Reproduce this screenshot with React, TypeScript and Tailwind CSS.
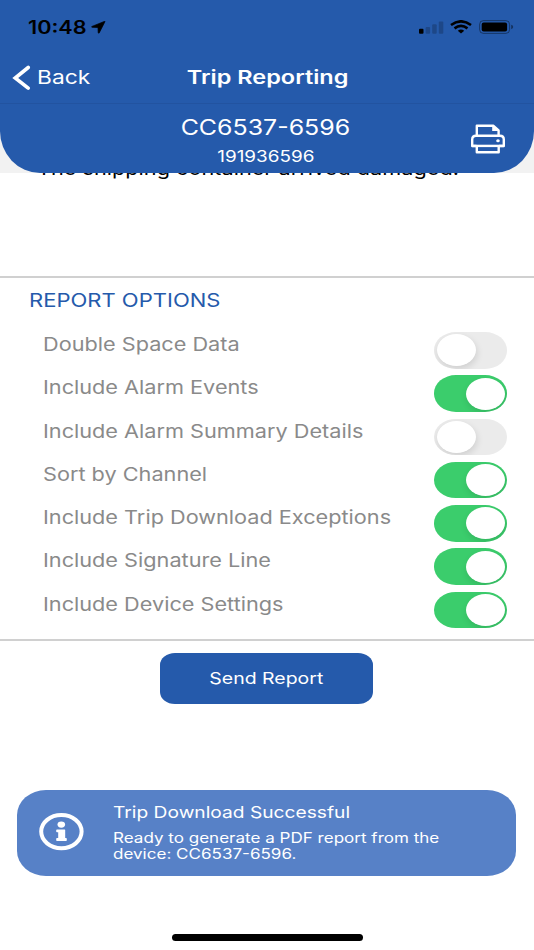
import clsx from "clsx";

const options = [
  { label: "Double Space Data", on: false },
  { label: "Include Alarm Events", on: true },
  { label: "Include Alarm Summary Details", on: false },
  { label: "Sort by Channel", on: true },
  { label: "Include Trip Download Exceptions", on: true },
  { label: "Include Signature Line", on: true },
  { label: "Include Device Settings", on: true },
];

function Toggle({ on }: { on: boolean }) {
  return (
    <div
      className={clsx(
        "flex h-[36.5px] w-[73px] items-center overflow-hidden rounded-[22px/18.25px] px-[2.5px]",
        on ? "justify-end bg-[#3bcd6c]" : "justify-start bg-[#ebebeb]"
      )}
    >
      <div className="h-8 w-[39px] rounded-[50%] bg-white shadow-[1px_3px_7px_rgba(0,0,0,0.12)]" />
    </div>
  );
}

function StatusBar() {
  return (
    <div className="flex h-[52px] items-center justify-between pt-[3px] pr-[20px] pl-[28px] text-black">
      <div className="flex items-center">
        <span className="w-[63px] origin-left scale-x-[1.2] text-[18px] leading-none font-semibold whitespace-nowrap">
          10:48
        </span>
        <svg width="15" height="13" viewBox="0 0 15 13" fill="currentColor" stroke="currentColor" strokeWidth="0.7" strokeLinejoin="round">
          <path d="M14 0.6 L8.2 11.9 Q7.4 12.6 7.2 11.4 L7 6.5 L1 6.3 Q0 6 1 5.4 L13.2 0.5 Q14.2 0.1 14 0.6Z" />
        </svg>
      </div>
      <div className="flex items-center">
        <svg width="25" height="13" viewBox="0 0 25 13" fill="currentColor">
          <rect x="0" y="7.8" width="4.5" height="5" rx="1" />
          <g opacity="0.2">
            <rect x="6.6" y="6" width="4.5" height="6.8" rx="1" />
            <rect x="13.2" y="3.3" width="4.5" height="9.5" rx="1" />
            <rect x="19.8" y="0.5" width="4.5" height="12.3" rx="1" />
          </g>
        </svg>
        <svg className="mb-[1px] ml-[6px]" width="22" height="14" viewBox="0 0 22 14" fill="none" stroke="currentColor" strokeWidth="2.6">
          <path d="M1 5 Q11 -2.4 21 5" />
          <path d="M4.5 8.4 Q11 3.4 17.5 8.4" />
          <path d="M7.8 10.8 Q11 8.4 14.2 10.8 L11 13.6Z" fill="currentColor" stroke="none" />
        </svg>
        <svg className="mb-[1px] ml-[7px]" width="35" height="14" viewBox="0 0 35 14">
          <rect x="0.6" y="0.6" width="30" height="12.8" rx="3.8" fill="none" stroke="black" strokeOpacity="0.4" />
          <rect x="2.7" y="2.4" width="25.4" height="9.2" rx="2" fill="black" />
          <path d="M32.2 4.8 Q34.2 5.4 34.2 7 Q34.2 8.6 32.2 9.2Z" fill="black" fillOpacity="0.45" />
        </svg>
      </div>
    </div>
  );
}

function NavBar() {
  return (
    <div className="grid h-[52px] grid-cols-3 items-center border-b border-[#2253a0] text-white">
      <div className="flex items-center pl-[12px]">
        <svg width="19" height="26" viewBox="0 0 19 26" fill="none" stroke="currentColor" strokeWidth="3.6" strokeLinecap="round" strokeLinejoin="miter">
          <path d="M16.2 2.5 L3.2 13 L16.2 23.2" />
        </svg>
        <span className="ml-[6px] origin-left scale-x-[1.23] text-[18.5px] leading-none">Back</span>
      </div>
      <h1 className="ml-[1px] justify-self-center scale-x-[1.27] text-[18.5px] leading-none font-semibold whitespace-nowrap">
        Trip Reporting
      </h1>
    </div>
  );
}

function PrinterIcon() {
  return (
    <svg width="36" height="30" viewBox="0 0 36 30" fill="none" stroke="white" strokeWidth="2.4" strokeLinejoin="round">
      <path d="M6.8 12 V1.8 H23.5 L28.6 6.4 V12" />
      <path d="M22.2 1.5 V7 H28.8Z" fill="white" stroke="none" />
      <path d="M6.5 22 H2.2 V15.5 Q2.2 11.8 6 11.8 H30 Q33.8 11.8 33.8 15.5 V22 H29" />
      <path d="M2.2 21.9 H33.8" />
      <path d="M6.8 22 V28.2 H28.7 V22" />
      <ellipse cx="28" cy="16.8" rx="1.8" ry="1.5" fill="white" stroke="none" />
    </svg>
  );
}

function InfoIcon() {
  return (
    <svg width="45" height="38" viewBox="0 0 45 38" fill="white">
      <ellipse cx="22.4" cy="18.6" rx="20.2" ry="16.6" fill="none" stroke="white" strokeWidth="4" />
      <ellipse cx="22.3" cy="11.6" rx="3.8" ry="3.1" />
      <path d="M18 16.4 H25.6 Q26.2 16.4 26.2 17 V25 H27 Q27.8 25 27.8 25.8 V27.2 Q27.8 28 27 28 H18 Q17.2 28 17.2 27.2 V25.8 Q17.2 25 18 25 H19.2 V19.3 H18 Q17.2 19.3 17.2 18.5 V17.2 Q17.2 16.4 18 16.4Z" />
    </svg>
  );
}

export default function App() {
  return (
    <div className="flex h-[950px] w-[534px] flex-col overflow-hidden bg-white font-['Inter',sans-serif]">
      <header className="h-[173px] shrink-0 bg-[#f2f2f2]">
        <div className="h-full rounded-b-[40px_42px] bg-[#255aab]">
          <StatusBar />
          <NavBar />
          <div className="relative flex flex-col items-center pt-[12px] pr-[3px] text-white">
            <div className="scale-x-[1.187] text-[21px] leading-[24px]">CC6537-6596</div>
            <div className="mt-[8px] scale-x-[1.22] text-[15.5px] leading-[18px]">191936596</div>
            <div className="absolute top-[20px] right-[28px]">
              <PrinterIcon />
            </div>
          </div>
        </div>
      </header>

      {/* Notes field, scrolled under the header */}
      <div className="h-[103px] shrink-0 overflow-hidden pl-[36.5px]">
        <p className="-mt-[17px] origin-left scale-x-[1.172] text-[18.5px] leading-[24px] whitespace-nowrap text-black">
          The shipping container arrived damaged.
        </p>
      </div>

      <section className="h-[365px] shrink-0 border-y-2 border-[#d0d0d0]">
        <h2 className="mt-[10px] ml-[29px] w-fit origin-left scale-x-[1.19] text-[18.5px] leading-[24px] text-[#255aab]">
          REPORT OPTIONS
        </h2>
        <ul className="mt-[20px] pr-[27px] pl-[43px]">
          {options.map(({ label, on }) => (
            <li key={label} className="flex h-[43.3px] items-start justify-between">
              <span className="origin-left scale-x-[1.172] text-[18.5px] leading-[24px] whitespace-nowrap text-[#8a8a8a]">
                {label}
              </span>
              <Toggle on={on} />
            </li>
          ))}
        </ul>
      </section>

      <button className="mt-[11.5px] ml-[159.5px] h-[51.5px] w-[213.5px] shrink-0 rounded-[15px/12px] bg-[#255aab] text-white">
        <span className="inline-block scale-x-[1.18] text-[16.5px] leading-none">Send Report</span>
      </button>

      <div className="mt-[85.5px] ml-[17px] flex h-[86px] w-[498.5px] shrink-0 rounded-[29px/25px] bg-[#5781c7] pl-[22px] text-white">
        <div className="mt-[23px]">
          <InfoIcon />
        </div>
        <div className="mt-[11px] ml-[29px]">
          <div className="w-fit origin-left scale-x-[1.163] text-[16.5px] leading-[22px] whitespace-nowrap">
            Trip Download Successful
          </div>
          <p className="mt-[7.5px] w-fit origin-left scale-x-[1.217] text-[14px] leading-[16.2px] whitespace-nowrap">
            Ready to generate a PDF report from the
            <br />
            device: CC6537-6596.
          </p>
        </div>
      </div>

      <div className="mt-[58.5px] ml-[171.5px] h-[6.5px] w-[191.5px] shrink-0 rounded-full bg-black" />
    </div>
  );
}
